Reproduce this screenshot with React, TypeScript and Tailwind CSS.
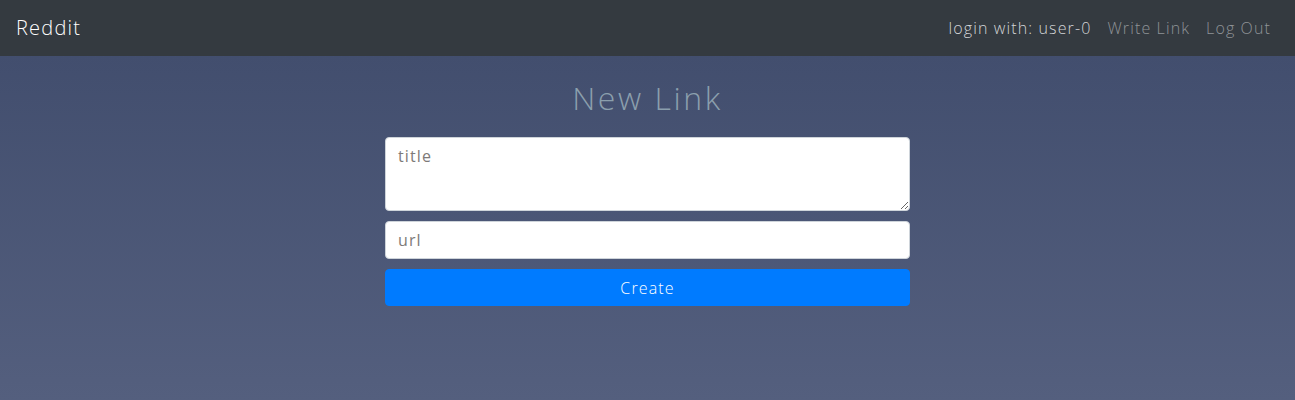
import { useState } from 'react'

const font = { fontFamily: '"Open Sans", "Noto Sans", sans-serif' }

export default function App() {
  const [title, setTitle] = useState('')
  const [url, setUrl] = useState('')

  return (
    <div className="min-h-[400px] flex flex-col tracking-[0.07em]" style={font}>
      {/* navbar */}
      <nav className="h-14 bg-[#343a40] flex items-center justify-between px-4">
        <a className="text-white text-[20px] font-light tracking-[0.06em]">Reddit</a>
        <div className="flex items-center text-base font-light">
          <span className="px-2 text-[#d3d5d7]">login with: user-0</span>
          <a className="px-2 text-[#8f9397]">Write Link</a>
          <a className="px-2 text-[#8f9397]">Log Out</a>
        </div>
      </nav>

      {/* body */}
      <main className="flex-1 bg-gradient-to-b from-[#424e6e] to-[#545f7e] flex flex-col items-center">
        <h2 className="mt-[23px] text-[32px] leading-[38px] font-light tracking-[0.08em] text-[#8b9fad]">
          New Link
        </h2>
        <form
          className="mt-[20px] w-[525px] flex flex-col"
          onSubmit={(e) => e.preventDefault()}
        >
          <textarea
            value={title}
            onChange={(e) => setTitle(e.target.value)}
            placeholder="title"
            className="h-[74px] bg-white border border-[#ced4da] rounded px-3 py-[6px] text-base tracking-[0.07em] text-[#495057] placeholder:text-[#7d7a78] outline-none resize-y"
            style={font}
          />
          <input
            value={url}
            onChange={(e) => setUrl(e.target.value)}
            placeholder="url"
            className="mt-[10px] h-[38px] bg-white border border-[#ced4da] rounded px-3 text-base tracking-[0.07em] text-[#495057] placeholder:text-[#7d7a78] outline-none"
            style={font}
          />
          <button
            type="submit"
            className="mt-[10px] h-[37px] bg-[#007bff] border border-[#007bff] rounded text-white text-base font-light tracking-[0.07em]"
            style={font}
          >
            Create
          </button>
        </form>
      </main>
    </div>
  )
}
